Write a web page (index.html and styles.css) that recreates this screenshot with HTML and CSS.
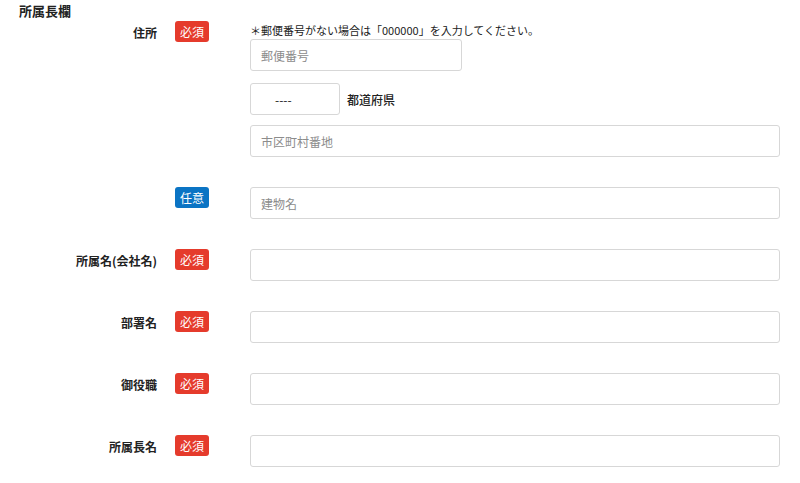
FILE: index.html
```html
<!DOCTYPE html>
<html lang="ja">
<head>
<meta charset="utf-8">
<title>所属長欄</title>
<link rel="stylesheet" href="styles.css">
</head>
<body>
<section class="section">
  <h2 class="section-title">所属長欄</h2>
  <div class="form">
    <div class="row">
      <div class="label">住所</div>
      <div class="badge-cell"><span class="badge badge-req">必須</span></div>
      <div class="field">
        <p class="note">＊郵便番号がない場合は「000000」を入力してください。</p>
        <div class="input input-zip"><span class="ph">郵便番号</span></div>
        <div class="pref-line">
          <div class="input input-pref"><span class="pref-val">----</span></div>
          <span class="pref-label">都道府県</span>
        </div>
        <div class="input input-full"><span class="ph">市区町村番地</span></div>
      </div>
    </div>
    <div class="row">
      <div class="label"></div>
      <div class="badge-cell"><span class="badge badge-opt">任意</span></div>
      <div class="field">
        <div class="input input-full"><span class="ph">建物名</span></div>
      </div>
    </div>
    <div class="row">
      <div class="label">所属名(会社名)</div>
      <div class="badge-cell"><span class="badge badge-req">必須</span></div>
      <div class="field"><div class="input input-full"></div></div>
    </div>
    <div class="row">
      <div class="label">部署名</div>
      <div class="badge-cell"><span class="badge badge-req">必須</span></div>
      <div class="field"><div class="input input-full"></div></div>
    </div>
    <div class="row">
      <div class="label">御役職</div>
      <div class="badge-cell"><span class="badge badge-req">必須</span></div>
      <div class="field"><div class="input input-full"></div></div>
    </div>
    <div class="row">
      <div class="label">所属長名</div>
      <div class="badge-cell"><span class="badge badge-req">必須</span></div>
      <div class="field"><div class="input input-full"></div></div>
    </div>
  </div>
</section>
</body>
</html>
```
FILE: styles.css
```css
html, body {
  margin: 0;
  padding: 0;
  background: #fff;
}
body {
  font-family: "Noto Sans CJK JP", "Noto Sans", sans-serif;
  color: #222;
  font-size: 12px;
}
.section {
  padding-top: 2px;
}
.section-title {
  margin: 0 0 2px 19px;
  font-size: 13px;
  line-height: 17px;
  font-weight: bold;
  color: #222;
}
.form {
  display: flex;
  flex-direction: column;
  gap: 30px;
}
.row {
  display: grid;
  grid-template-columns: 157px 93px 530px;
  align-items: start;
}
.label {
  text-align: right;
  font-weight: bold;
  font-size: 12px;
  line-height: 21px;
  color: #222;
  padding-top: 1px;
}
.badge-cell {
  padding-left: 18px;
}
.badge {
  display: inline-block;
  width: 34px;
  height: 21px;
  line-height: 21px;
  text-align: center;
  color: #fff;
  font-size: 12px;
  border-radius: 3px;
}
.badge-req { background: #e53b2c; }
.badge-opt { background: #0b74c4; }
.field {
  display: flex;
  flex-direction: column;
}
.note {
  margin: 0;
  font-size: 11px;
  line-height: 18px;
  color: #222;
}
.input {
  box-sizing: border-box;
  height: 32px;
  border: 1px solid #d7d7d7;
  border-radius: 3px;
  background: #fff;
  display: flex;
  align-items: center;
  padding-left: 10px;
}
.input-zip { width: 212px; }
.input-full { width: 530px; }
.input-pref { width: 90px; padding-left: 24px; }
.ph {
  color: #8c8c8c;
  font-size: 12px;
}
.pref-val {
  color: #222;
  font-size: 12px;
}
.pref-line {
  display: flex;
  align-items: center;
  gap: 7px;
  margin: 12px 0 10px;
}
.pref-label {
  font-weight: 500;
  font-size: 12px;
  color: #222;
}
```
